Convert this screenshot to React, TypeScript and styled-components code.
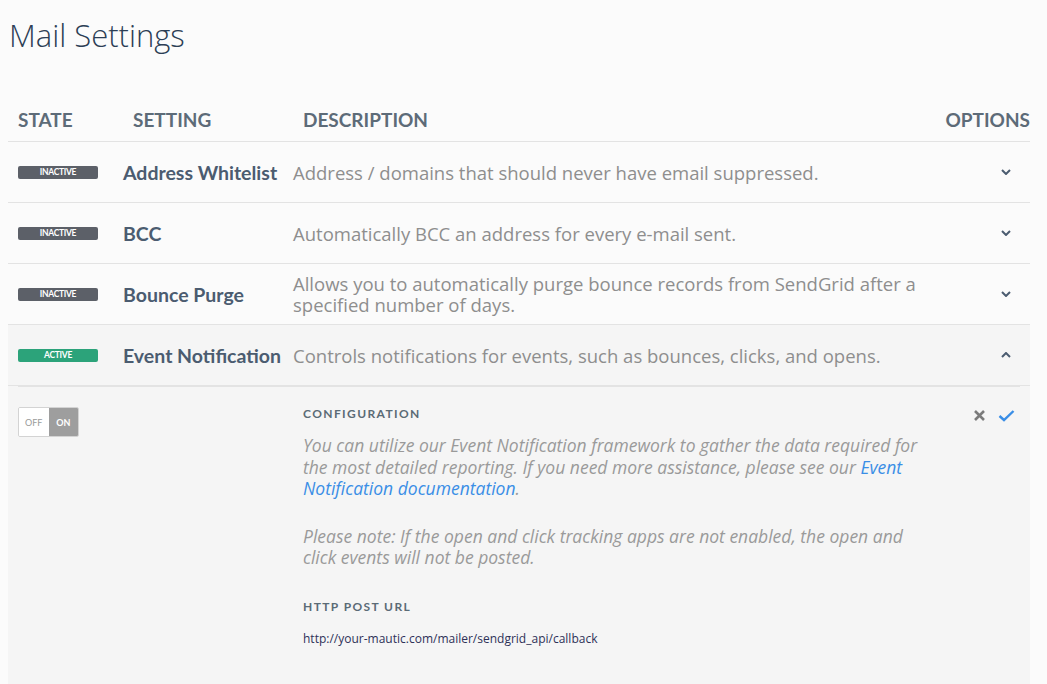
import React, { FunctionComponent } from "react";
import styled, { createGlobalStyle } from "styled-components";

const GlobalStyle = createGlobalStyle`
  body {
    margin: 8px;
    background: #fbfbfb;
    font-family: Lato, "Open Sans", sans-serif;
  }
`;

const Title = styled.h1`
  margin: 0 0 0 1px;
  padding-top: 10px;
  font-family: "Open Sans", sans-serif;
  font-size: 31px;
  font-weight: 300;
  color: #2c3e55;
  line-height: 34px;
`;

const Table = styled.div`
  margin-top: 48px;
  width: 1022px;
`;

const Grid = styled.div`
  display: grid;
  grid-template-columns: 115px 170px 1fr 90px;
  align-items: center;
`;

const HeaderRow = styled(Grid)`
  height: 42px;
  padding-bottom: 2px;
  border-bottom: 1px solid #e3e3e3;
  box-sizing: border-box;
`;

const HeadCell = styled.div<{ $right?: boolean }>`
  font-size: 19px;
  font-weight: 700;
  color: #5d6b78;
  padding-left: ${(p) => (p.$right ? 0 : 10)}px;
  text-align: ${(p) => (p.$right ? "right" : "left")};
`;

const Row = styled(Grid)<{ $open?: boolean }>`
  height: 61px;
  box-sizing: border-box;
  border-bottom: 1px solid #e3e3e3;
  background: ${(p) => (p.$open ? "#f5f5f5" : "transparent")};
`;

const Badge = styled.span<{ $active?: boolean }>`
  display: block;
  width: 80px;
  height: 13px;
  margin-left: 10px;
  border-radius: 2px;
  background: ${(p) => (p.$active ? "#2ca37a" : "#5c6068")};
  color: #fff;
  font-size: 8.5px;
  font-weight: 700;
  line-height: 13px;
  text-align: center;
  letter-spacing: -0.3px;
`;

const Name = styled.div`
  font-size: 19.5px;
  font-weight: 700;
  color: #4b5c70;
  white-space: nowrap;
`;

const Desc = styled.div`
  font-family: "Open Sans", sans-serif;
  font-size: 18.5px;
  color: #8e8e8e;
  line-height: 21px;
  padding-right: 20px;
`;

const Toggle = styled.button`
  display: flex;
  justify-content: flex-end;
  padding: 0 19px 0 0;
  border: none;
  background: none;
  color: #4b5c70;
  cursor: pointer;
`;

const Details = styled.div`
  background: #f5f5f5;
  padding: 0 10px;
  height: 298px;
  box-sizing: border-box;
`;

const DetailsGrid = styled.div`
  display: grid;
  grid-template-columns: 285px 1fr 60px;
  border-top: 1px solid #e3e3e3;
  padding-top: 20px;
`;

const Switch = styled.div`
  display: flex;
  width: 61px;
  height: 30px;
  box-sizing: border-box;
  border: 1px solid #d3d3d3;
  border-radius: 2px;
  overflow: hidden;
  font-size: 9px;
`;

const SwitchHalf = styled.span<{ $on?: boolean }>`
  flex: 1;
  display: flex;
  align-items: center;
  justify-content: center;
  background: ${(p) => (p.$on ? "#9e9e9e" : "#fff")};
  color: ${(p) => (p.$on ? "#fff" : "#9a9a9a")};
  font-weight: ${(p) => (p.$on ? 700 : 400)};
`;

const Label = styled.div`
  font-size: 12px;
  font-weight: 700;
  letter-spacing: 1.4px;
  color: #5b6b76;
  line-height: 14px;
  margin: 0 0 14px;
`;

const Note = styled.p`
  margin: 0 0 26px;
  max-width: 622px;
  font-family: "Open Sans", sans-serif;
  font-size: 17.5px;
  font-style: italic;
  line-height: 21.5px;
  color: #9a9a9a;

  a {
    color: #3a8ee6;
    text-decoration: none;
  }
`;

const UrlLabel = styled(Label)`
  margin-top: 31px;
  margin-bottom: 16px;
`;

const Url = styled.div`
  font-size: 12px;
  color: #2e3158;
  font-family: "Open Sans", sans-serif;
`;

const Actions = styled.div`
  display: flex;
  justify-content: flex-end;
  align-items: flex-start;
  gap: 12px;
  padding: 2px 5px 0 0;
`;

const Chevron: FunctionComponent<{ up?: boolean }> = ({ up }) => (
  <svg width="10" height="6" viewBox="0 0 10 6">
    <path
      d={up ? "M1 5 L5 1 L9 5" : "M1 1 L5 5 L9 1"}
      fill="none"
      stroke="currentColor"
      strokeWidth="2"
    />
  </svg>
);

type Setting = {
  name: string;
  description: string;
  active: boolean;
};

const settings: Setting[] = [
  {
    name: "Address Whitelist",
    description: "Address / domains that should never have email suppressed.",
    active: false,
  },
  {
    name: "BCC",
    description: "Automatically BCC an address for every e-mail sent.",
    active: false,
  },
  {
    name: "Bounce Purge",
    description:
      "Allows you to automatically purge bounce records from SendGrid after a specified number of days.",
    active: false,
  },
  {
    name: "Event Notification",
    description:
      "Controls notifications for events, such as bounces, clicks, and opens.",
    active: true,
  },
];

const App: FunctionComponent = () => {
  return (
    <>
      <GlobalStyle />
      <Title>Mail Settings</Title>
      <Table>
        <HeaderRow>
          <HeadCell>STATE</HeadCell>
          <HeadCell>SETTING</HeadCell>
          <HeadCell>DESCRIPTION</HeadCell>
          <HeadCell $right>OPTIONS</HeadCell>
        </HeaderRow>
        {settings.map((s) => (
          <Row key={s.name} $open={s.active}>
            <Badge $active={s.active}>{s.active ? "ACTIVE" : "INACTIVE"}</Badge>
            <Name>{s.name}</Name>
            <Desc>{s.description}</Desc>
            <Toggle>
              <Chevron up={s.active} />
            </Toggle>
          </Row>
        ))}
        <Details>
          <DetailsGrid>
            <div>
              <Switch>
                <SwitchHalf>OFF</SwitchHalf>
                <SwitchHalf $on>ON</SwitchHalf>
              </Switch>
            </div>
            <div>
              <Label>CONFIGURATION</Label>
              <Note>
                You can utilize our Event Notification framework to gather the
                data required for the most detailed reporting. If you need more
                assistance, please see our{" "}
                <a href="#">Event Notification documentation</a>.
              </Note>
              <Note>
                Please note: If the open and click tracking apps are not
                enabled, the open and click events will not be posted.
              </Note>
              <UrlLabel>HTTP POST URL</UrlLabel>
              <Url>http://your-mautic.com/mailer/sendgrid_api/callback</Url>
            </div>
            <Actions>
              <svg width="13" height="13" viewBox="0 0 13 13">
                <path
                  d="M2 2 L11 11 M11 2 L2 11"
                  stroke="#7b7b7b"
                  strokeWidth="2.6"
                />
              </svg>
              <svg width="17" height="13" viewBox="0 0 17 13">
                <path
                  d="M1.5 7 L6 11 L15.5 2"
                  fill="none"
                  stroke="#3a8ee6"
                  strokeWidth="2.4"
                />
              </svg>
            </Actions>
          </DetailsGrid>
        </Details>
      </Table>
    </>
  );
};

export default App;
